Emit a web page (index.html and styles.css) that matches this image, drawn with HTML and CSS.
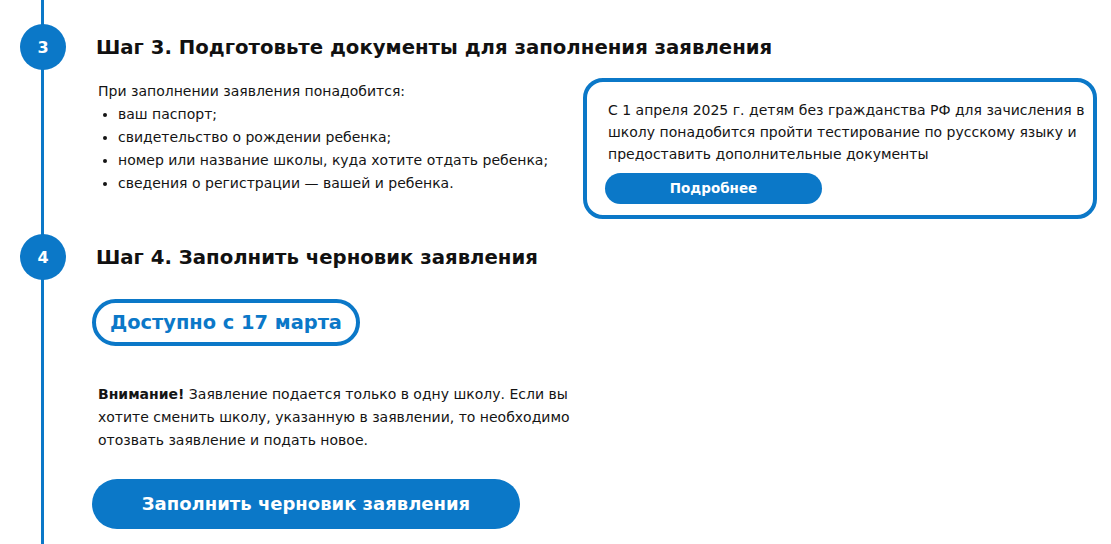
FILE: index.html
```html
<!DOCTYPE html>
<html lang="ru">
<head>
    <meta charset="UTF-8">
    <meta name="viewport" content="width=device-width, initial-scale=1.0">
    <title>Запись в первый класс</title>
    <link rel="stylesheet" href="styles.css">
</head>
<body>

<div class="steps">

    <!-- Шаг 3 -->
    <section class="step step-3">
        <div class="marker">3</div>
        <h2 class="step-title">Шаг 3. Подготовьте документы для заполнения заявления</h2>
        <div class="step-body docs">
            <div class="docs-list">
                <p>При заполнении заявления понадобится:</p>
                <ul>
                    <li>ваш паспорт;</li>
                    <li>свидетельство о рождении ребенка;</li>
                    <li>номер или название школы, куда хотите отдать ребенка;</li>
                    <li>сведения о регистрации — вашей и ребенка.</li>
                </ul>
            </div>
            <div class="notice">
                <p>С 1 апреля 2025 г. детям без гражданства РФ для зачисления в школу понадобится пройти тестирование по русскому языку и предоставить дополнительные документы</p>
                <a href="#" class="btn btn-small">Подробнее</a>
            </div>
        </div>
    </section>

    <!-- Шаг 4 -->
    <section class="step step-4">
        <div class="marker">4</div>
        <h2 class="step-title">Шаг 4. Заполнить черновик заявления</h2>
        <div class="step-body">
            <div class="available">Доступно с 17 марта</div>
            <p class="warning"><b>Внимание!</b> Заявление подается только в одну школу. Если вы хотите сменить школу, указанную в заявлении, то необходимо отозвать заявление и подать новое.</p>
            <a href="#" class="btn btn-big">Заполнить черновик заявления</a>
        </div>
    </section>

</div>

</body>
</html>
```

FILE: styles.css
```css
* {
    box-sizing: border-box;
}
body {
    font-family: 'DejaVu Sans', 'Liberation Sans', sans-serif;
    background-color: #fff;
    margin: 0;
    padding: 0;
    color: #141414;
}
p {
    margin: 0;
}
.steps {
    /* вертикальная линия таймлайна */
    background-image: linear-gradient(#0b78c8, #0b78c8);
    background-repeat: no-repeat;
    background-size: 3px 100%;
    background-position: 41px 0;
    padding-top: 24px;
    min-height: 544px;
}
.step {
    display: grid;
    grid-template-columns: 96px 1fr;
    grid-template-rows: 46px auto;
    align-items: center;
}
.step-4 {
    margin-top: 15px;
}
.marker {
    width: 46px;
    height: 46px;
    margin-left: 20px;
    border-radius: 50%;
    background-color: #0b78c8;
    color: white;
    font-weight: 700;
    font-size: 16px;
    display: flex;
    align-items: center;
    justify-content: center;
}
.step-title {
    margin: 0;
    font-size: 19.7px;
    font-weight: 700;
    color: #111;
}
.step-body {
    grid-column: 2;
    align-self: start;
    font-size: 14px;
    line-height: 23px;
}
.docs {
    display: flex;
    align-items: flex-start;
    padding-top: 8px;
}
.docs-list {
    width: 487px;
    padding-top: 2px;
    padding-left: 2px;
}
.docs-list ul {
    margin: 0;
    padding-left: 20px;
}
.notice {
    width: 514px;
    border: 4px solid #0b78c8;
    border-radius: 20px;
    padding: 17px 6px 11px 21px;
    font-size: 14px;
    line-height: 22px;
}
.btn {
    display: block;
    background-color: #0b78c8;
    color: white;
    font-weight: 700;
    text-align: center;
    text-decoration: none;
    border-radius: 999px;
}
.btn-small {
    width: 217px;
    height: 31px;
    line-height: 31px;
    font-size: 13.5px;
    margin-top: 8px;
    margin-left: -3px;
}
.available {
    display: inline-block;
    margin-top: 19px;
    margin-left: -4px;
    border: 4px solid #0b78c8;
    border-radius: 999px;
    padding: 0 14px;
    height: 47px;
    line-height: 39px;
    color: #0b78c8;
    font-size: 19.4px;
    font-weight: 700;
}
.warning {
    width: 482px;
    margin-top: 37px;
    padding-left: 2px;
}
.btn-big {
    width: 428px;
    height: 50px;
    line-height: 50px;
    margin-top: 27px;
    margin-left: -4px;
    font-size: 18px;
}
```
